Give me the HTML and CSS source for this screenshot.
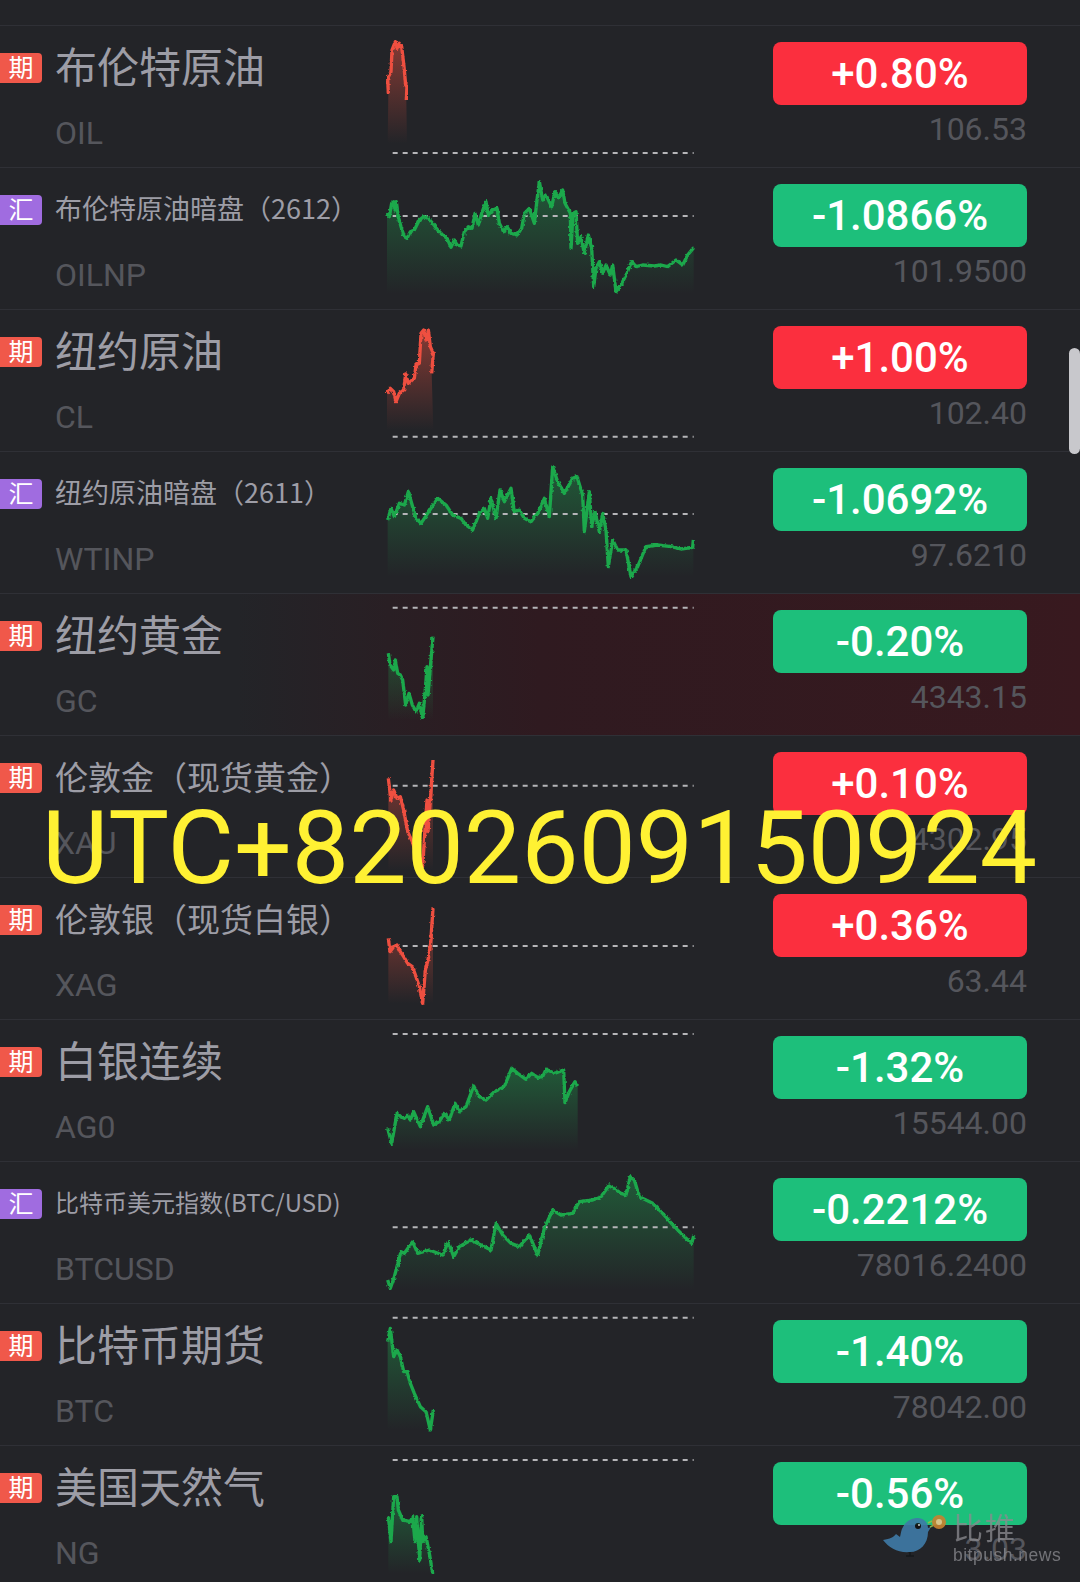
FILE: index.html
```html
<!DOCTYPE html>
<html lang="zh">
<head>
    <meta charset="UTF-8">
    <meta name="viewport" content="width=device-width, initial-scale=1.0">
    <title>行情列表</title>
    <link rel="stylesheet" href="styles.css">
</head>
<body>
    <div class="screen">
        <div class="market-list">
            <svg width="0" height="0" class="defs">
                <defs>
                    <linearGradient id="fadeGreen" x1="0" y1="0" x2="0" y2="1">
                        <stop offset="0" stop-color="#1f8f48" stop-opacity="0.5"/>
                        <stop offset="1" stop-color="#1f8f48" stop-opacity="0"/>
                    </linearGradient>
                    <linearGradient id="fadeRed" x1="0" y1="0" x2="0" y2="1">
                        <stop offset="0" stop-color="#e8503f" stop-opacity="0.5"/>
                        <stop offset="1" stop-color="#e8503f" stop-opacity="0"/>
                    </linearGradient>
                    <filter id="rough" x="-5%" y="-10%" width="110%" height="120%">
                        <feTurbulence type="fractalNoise" baseFrequency="0.12" numOctaves="2" seed="4" result="noise"/>
                        <feDisplacementMap in="SourceGraphic" in2="noise" scale="9" xChannelSelector="R" yChannelSelector="G"/>
                    </filter>
                </defs>
            </svg>

            <div class="row">
                <span class="tag tag-fut">期</span>
                <div class="info">
                    <div class="name name-lg">布伦特原油</div>
                    <div class="symbol">OIL</div>
                </div>
                <svg class="chart" viewBox="45 75 930 426">
                    <polygon class="area-red" points="52,280 50,235 60,215 63,150 73,125 78,145 85,130 92,140 99,200 104,255 108,255 106,300 108,430 50,430"/>
                    <line class="base" x1="65" x2="968" y1="459" y2="459"/>
                    <polyline class="line-red" points="52,280 50,235 60,215 63,150 73,125 78,145 85,130 92,140 99,200 104,255 108,255 106,300"/>
                </svg>
                <div class="quote">
                    <div class="change up">+0.80%</div>
                    <div class="price">106.53</div>
                </div>
            </div>

            <div class="row">
                <span class="tag tag-fx">汇</span>
                <div class="info">
                    <div class="name name-sm">布伦特原油暗盘（2612）</div>
                    <div class="symbol">OILNP</div>
                </div>
                <svg class="chart" viewBox="45 -9 930 426">
                    <polygon class="area-green" points="48,130 55,140 62,100 68,95 72,120 76,95 82,140 90,170 100,200 108,205 118,185 130,180 145,150 158,140 172,145 185,160 200,180 215,195 228,205 240,232 250,210 258,225 270,228 280,185 292,170 303,175 312,130 322,165 332,130 345,95 352,135 365,120 378,115 385,160 398,185 408,170 420,190 438,195 452,175 460,130 475,115 490,160 498,90 505,35 515,90 525,75 542,110 552,65 562,85 575,60 582,100 598,130 600,235 606,130 615,125 620,220 630,200 640,250 652,195 662,235 668,350 675,295 685,275 695,310 705,285 718,315 725,285 735,365 750,345 765,315 782,275 795,290 815,285 850,288 870,285 890,290 915,270 935,285 950,255 968,233 968,370 48,370"/>
                    <line class="base" x1="65" x2="968" y1="138" y2="138"/>
                    <polyline class="line-green" points="48,130 55,140 62,100 68,95 72,120 76,95 82,140 90,170 100,200 108,205 118,185 130,180 145,150 158,140 172,145 185,160 200,180 215,195 228,205 240,232 250,210 258,225 270,228 280,185 292,170 303,175 312,130 322,165 332,130 345,95 352,135 365,120 378,115 385,160 398,185 408,170 420,190 438,195 452,175 460,130 475,115 490,160 498,90 505,35 515,90 525,75 542,110 552,65 562,85 575,60 582,100 598,130 600,235 606,130 615,125 620,220 630,200 640,250 652,195 662,235 668,350 675,295 685,275 695,310 705,285 718,315 725,285 735,365 750,345 765,315 782,275 795,290 815,285 850,288 870,285 890,290 915,270 935,285 950,255 968,233"/>
                </svg>
                <div class="quote">
                    <div class="change down">-1.0866%</div>
                    <div class="price">101.9500</div>
                </div>
            </div>

            <div class="row">
                <span class="tag tag-fut">期</span>
                <div class="info">
                    <div class="name name-lg">纽约原油</div>
                    <div class="symbol">CL</div>
                </div>
                <svg class="chart" viewBox="45 417 930 426">
                    <polygon class="area-red" points="48,670 58,655 68,665 75,695 85,670 98,660 104,612 112,640 130,625 135,585 145,580 150,490 158,480 165,510 172,480 178,530 187,550 182,610 187,780 48,780"/>
                    <line class="base" x1="65" x2="968" y1="800" y2="800"/>
                    <polyline class="line-red" points="48,670 58,655 68,665 75,695 85,670 98,660 104,612 112,640 130,625 135,585 145,580 150,490 158,480 165,510 172,480 178,530 187,550 182,610"/>
                </svg>
                <div class="quote">
                    <div class="change up">+1.00%</div>
                    <div class="price">102.40</div>
                </div>
            </div>

            <div class="row">
                <span class="tag tag-fx">汇</span>
                <div class="info">
                    <div class="name name-sm">纽约原油暗盘（2611）</div>
                    <div class="symbol">WTINP</div>
                </div>
                <svg class="chart" viewBox="45 843 930 426">
                    <polygon class="area-green" points="50,1050 60,1015 70,1040 85,1000 100,1005 112,965 125,1010 135,1045 150,1060 170,1030 200,985 225,1005 245,1035 270,1045 285,1065 305,1080 325,1030 340,1015 350,1045 360,985 375,1045 387,960 400,995 420,955 430,1025 445,1020 460,1045 480,1055 500,1030 520,985 535,1040 545,890 560,935 580,970 605,925 618,920 635,975 640,1085 655,965 662,1070 672,1025 685,1085 695,1030 705,1080 712,1190 725,1110 740,1140 765,1140 780,1220 800,1190 825,1130 860,1125 900,1130 930,1137 965,1132 967,1110 967,1220 50,1220"/>
                    <line class="base" x1="65" x2="968" y1="1032" y2="1032"/>
                    <polyline class="line-green" points="50,1050 60,1015 70,1040 85,1000 100,1005 112,965 125,1010 135,1045 150,1060 170,1030 200,985 225,1005 245,1035 270,1045 285,1065 305,1080 325,1030 340,1015 350,1045 360,985 375,1045 387,960 400,995 420,955 430,1025 445,1020 460,1045 480,1055 500,1030 520,985 535,1040 545,890 560,935 580,970 605,925 618,920 635,975 640,1085 655,965 662,1070 672,1025 685,1085 695,1030 705,1080 712,1190 725,1110 740,1140 765,1140 780,1220 800,1190 825,1130 860,1125 900,1130 930,1137 965,1132 967,1110"/>
                </svg>
                <div class="quote">
                    <div class="change down">-1.0692%</div>
                    <div class="price">97.6210</div>
                </div>
            </div>

            <div class="row row-active">
                <span class="tag tag-fut">期</span>
                <div class="info">
                    <div class="name name-lg">纽约黄金</div>
                    <div class="symbol">GC</div>
                </div>
                <svg class="chart" viewBox="45 9 930 426">
                    <polygon class="area-green" points="52,190 57,225 68,240 73,210 80,250 88,255 95,270 104,345 114,310 124,345 135,365 145,340 155,385 163,300 168,230 171,315 179,220 186,140 186,390 52,390"/>
                    <line class="base" x1="65" x2="968" y1="53" y2="53"/>
                    <polyline class="line-green" points="52,190 57,225 68,240 73,210 80,250 88,255 95,270 104,345 114,310 124,345 135,365 145,340 155,385 163,300 168,230 171,315 179,220 186,140"/>
                </svg>
                <div class="quote">
                    <div class="change down">-0.20%</div>
                    <div class="price">4343.15</div>
                </div>
            </div>

            <div class="row">
                <span class="tag tag-fut">期</span>
                <div class="info">
                    <div class="name name-md">伦敦金（现货黄金）</div>
                    <div class="symbol">XAU</div>
                </div>
                <svg class="chart" viewBox="45 435 930 426">
                    <polygon class="area-red" points="52,565 60,630 68,600 78,625 88,620 98,660 110,725 124,755 135,790 145,800 155,830 163,700 168,630 171,725 179,620 186,510 186,840 52,840"/>
                    <line class="base" x1="65" x2="968" y1="587" y2="587"/>
                    <polyline class="line-red" points="52,565 60,630 68,600 78,625 88,620 98,660 110,725 124,755 135,790 145,800 155,830 163,700 168,630 171,725 179,620 186,510"/>
                </svg>
                <div class="quote">
                    <div class="change up">+0.10%</div>
                    <div class="price">4302.95</div>
                </div>
            </div>

            <div class="row">
                <span class="tag tag-fut">期</span>
                <div class="info">
                    <div class="name name-md">伦敦银（现货白银）</div>
                    <div class="symbol">XAG</div>
                </div>
                <svg class="chart" viewBox="45 861 930 426">
                    <polygon class="area-red" points="52,1045 57,1085 68,1070 78,1065 88,1085 98,1100 110,1120 124,1130 135,1160 145,1190 155,1240 163,1140 171,1110 179,1060 186,955 186,1240 52,1240"/>
                    <line class="base" x1="65" x2="968" y1="1068" y2="1068"/>
                    <polyline class="line-red" points="52,1045 57,1085 68,1070 78,1065 88,1085 98,1100 110,1120 124,1130 135,1160 145,1190 155,1240 163,1140 171,1110 179,1060 186,955"/>
                </svg>
                <div class="quote">
                    <div class="change up">+0.36%</div>
                    <div class="price">63.44</div>
                </div>
            </div>

            <div class="row">
                <span class="tag tag-fut">期</span>
                <div class="info">
                    <div class="name name-lg">白银连续</div>
                    <div class="symbol">AG0</div>
                </div>
                <svg class="chart" viewBox="45 -3 930 426">
                    <polygon class="area-green" points="50,325 62,370 78,280 90,290 100,295 110,285 118,300 128,275 148,320 170,260 188,315 205,305 220,280 235,300 252,250 265,275 285,260 308,198 325,230 345,240 370,215 400,200 422,145 440,160 465,178 482,160 500,172 515,170 525,148 550,160 578,150 582,248 595,215 612,185 620,198 620,390 50,390"/>
                    <line class="base" x1="65" x2="968" y1="42" y2="42"/>
                    <polyline class="line-green" points="50,325 62,370 78,280 90,290 100,295 110,285 118,300 128,275 148,320 170,260 188,315 205,305 220,280 235,300 252,250 265,275 285,260 308,198 325,230 345,240 370,215 400,200 422,145 440,160 465,178 482,160 500,172 515,170 525,148 550,160 578,150 582,248 595,215 612,185 620,198"/>
                </svg>
                <div class="quote">
                    <div class="change down">-1.32%</div>
                    <div class="price">15544.00</div>
                </div>
            </div>

            <div class="row">
                <span class="tag tag-fx">汇</span>
                <div class="info">
                    <div class="name name-xs">比特币美元指数(BTC/USD)</div>
                    <div class="symbol">BTCUSD</div>
                </div>
                <svg class="chart" viewBox="45 423 930 426">
                    <polygon class="area-green" points="50,780 58,805 70,770 90,695 100,700 125,665 140,700 175,690 215,705 232,665 248,710 265,680 300,660 330,675 360,690 375,610 395,645 420,670 445,680 475,645 500,705 520,625 545,570 570,585 605,580 625,545 665,540 690,530 715,495 750,520 765,525 778,470 790,480 805,530 845,550 875,580 910,620 940,650 962,670 968,648 968,810 50,810"/>
                    <line class="base" x1="65" x2="968" y1="622" y2="622"/>
                    <polyline class="line-green" points="50,780 58,805 70,770 90,695 100,700 125,665 140,700 175,690 215,705 232,665 248,710 265,680 300,660 330,675 360,690 375,610 395,645 420,670 445,680 475,645 500,705 520,625 545,570 570,585 605,580 625,545 665,540 690,530 715,495 750,520 765,525 778,470 790,480 805,530 845,550 875,580 910,620 940,650 962,670 968,648"/>
                </svg>
                <div class="quote">
                    <div class="change down">-0.2212%</div>
                    <div class="price">78016.2400</div>
                </div>
            </div>

            <div class="row">
                <span class="tag tag-fut">期</span>
                <div class="info">
                    <div class="name name-lg">比特币期货</div>
                    <div class="symbol">BTC</div>
                </div>
                <svg class="chart" viewBox="45 9 930 426">
                    <polygon class="area-green" points="50,125 58,85 68,170 78,150 88,170 98,215 108,215 118,250 130,280 148,320 165,335 178,390 187,330 187,390 50,390"/>
                    <line class="base" x1="65" x2="968" y1="53" y2="53"/>
                    <polyline class="line-green" points="50,125 58,85 68,170 78,150 88,170 98,215 108,215 118,250 130,280 148,320 165,335 178,390 187,330"/>
                </svg>
                <div class="quote">
                    <div class="change down">-1.40%</div>
                    <div class="price">78042.00</div>
                </div>
            </div>

            <div class="row">
                <span class="tag tag-fut">期</span>
                <div class="info">
                    <div class="name name-lg">美国天然气</div>
                    <div class="symbol">NG</div>
                </div>
                <svg class="chart" viewBox="45 435 930 426">
                    <polygon class="area-green" points="52,650 60,725 68,590 78,590 82,630 95,660 118,665 125,650 132,725 137,650 146,780 152,648 155,725 165,710 175,760 185,820 185,820 52,820"/>
                    <line class="base" x1="65" x2="968" y1="480" y2="480"/>
                    <polyline class="line-green" points="52,650 60,725 68,590 78,590 82,630 95,660 118,665 125,650 132,725 137,650 146,780 152,648 155,725 165,710 175,760 185,820"/>
                </svg>
                <div class="quote">
                    <div class="change down">-0.56%</div>
                    <div class="price">3.03</div>
                </div>
            </div>
        </div>

        <div class="scrollbar"></div>

        <div class="stamp">UTC+8202609150924</div>

        <div class="watermark">
            <svg class="bird" viewBox="0 0 66 48" width="66" height="48">
                <path d="M1 30 C8 29 12 27 14 24 L18 27 C19 23 19 20 21 17 C24 11 30 8 36 8 C42 8 46 13 46 18 L49 17 L46 22 C46 34 38 42 28 42 C16 43 7 38 1 30 Z" fill="#3f7ba8"/>
                <circle cx="36" cy="16" r="3" fill="#111"/>
                <circle cx="37" cy="15" r="1" fill="#ddd"/>
                <path d="M28 42 L28 46 M24 46 L32 46" stroke="#15171a" stroke-width="1.5"/>
                <path d="M46 13 L50 11 M48 17 L52 15" stroke="#8fc04a" stroke-width="1.5"/>
                <circle cx="57" cy="12" r="7" fill="#c9822f"/>
                <circle cx="57" cy="12" r="3" fill="#ecc48a"/>
            </svg>
            <div class="mark-text">
                <div class="mark-cn">比推</div>
                <div class="mark-en">bitpush.news</div>
            </div>
        </div>
    </div>
</body>
</html>
```

FILE: styles.css
```css
* {
    box-sizing: border-box;
    margin: 0;
    padding: 0;
}
body {
    background-color: #232428;
    font-family: "Noto Sans CJK SC", Roboto, sans-serif;
    overflow: hidden;
}
.screen {
    position: relative;
    width: 1080px;
    height: 1582px;
    overflow: hidden;
}
.defs {
    position: absolute;
}
.market-list {
    padding-top: 25px;
}
.row {
    display: flex;
    align-items: flex-start;
    height: 142px;
    border-top: 1px solid #2f3036;
}
.row-active {
    background: linear-gradient(90deg, #232428 22%, #2f1a20 50%, #38191f 100%);
}
.tag {
    flex: none;
    width: 42px;
    height: 30px;
    margin-top: 27px;
    border-radius: 0 4px 4px 0;
    color: #fff;
    font-size: 25px;
    line-height: 27px;
    text-align: center;
}
.tag-fut {
    background-color: #f0584a;
}
.tag-fx {
    background-color: #a06ce0;
}
.info {
    flex: none;
    width: 331px;
    margin-left: 13px;
}
.name {
    display: flex;
    align-items: center;
    height: 77px;
    color: #9d9da6;
    white-space: nowrap;
}
.name-lg {
    font-size: 42px;
}
.name-md {
    padding-top: 2px;
    font-size: 33px;
}
.name-sm {
    padding-top: 2px;
    font-size: 27px;
}
.name-xs {
    padding-top: 2px;
    font-size: 24px;
}
.symbol {
    margin-top: 12px;
    color: #55565c;
    font-family: Roboto, sans-serif;
    font-size: 32px;
    line-height: 36px;
}
.chart {
    flex: none;
    width: 310px;
    height: 142px;
    margin-top: -1px;
    overflow: visible;
}
.line-green,
.line-red {
    fill: none;
    stroke-width: 10;
    stroke-linejoin: round;
    filter: url(#rough);
}
.line-green {
    stroke: #1aa84c;
}
.line-red {
    stroke: #ee4f40;
}
.area-green {
    fill: url(#fadeGreen);
}
.area-red {
    fill: url(#fadeRed);
}
.base {
    stroke: #b5b5b8;
    stroke-width: 6;
    stroke-dasharray: 15 15;
}
.quote {
    flex: none;
    width: 254px;
    margin-left: 77px;
    margin-top: 16px;
    font-family: Roboto, sans-serif;
    text-align: right;
}
.change {
    height: 63px;
    border-radius: 8px;
    color: #fff;
    font-size: 42px;
    font-weight: 500;
    line-height: 63px;
    text-align: center;
}
.up {
    background-color: #fb2f3e;
}
.down {
    background-color: #1dbf7b;
}
.price {
    color: #55565c;
    font-size: 32px;
    line-height: 48px;
}
.scrollbar {
    position: absolute;
    top: 348px;
    right: 0;
    width: 11px;
    height: 106px;
    border-radius: 6px;
    background-color: #c8c8cc;
}
.stamp {
    position: absolute;
    top: 788px;
    left: 42px;
    color: #fff133;
    font-family: Roboto, sans-serif;
    font-size: 102px;
    line-height: 120px;
    white-space: nowrap;
}
.watermark {
    position: absolute;
    top: 1510px;
    left: 882px;
    display: flex;
    align-items: flex-start;
    opacity: 0.9;
}
.mark-text {
    margin-left: 5px;
    color: #8b8b90;
    opacity: 0.85;
}
.mark-cn {
    font-size: 30px;
    line-height: 32px;
    letter-spacing: 2px;
}
.mark-en {
    margin-top: 3px;
    font-family: "Liberation Sans", sans-serif;
    font-size: 17.5px;
    line-height: 20px;
    letter-spacing: 0.5px;
}
```
